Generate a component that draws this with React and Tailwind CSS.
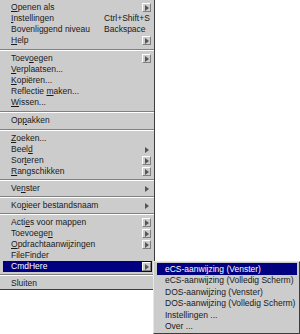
import React from 'react';

// Hoofdmenu: label, onderstreepte letter (index), sneltoets, pijl ('box' of 'plain')
const groups = [
    [
        { label: 'Openen als', u: 0, arrow: 'box' },
        { label: 'Instellingen', u: 0, shortcut: 'Ctrl+Shift+S' },
        { label: 'Bovenliggend niveau', u: -1, shortcut: 'Backspace' },
        { label: 'Help', u: 0, arrow: 'box' },
    ],
    [
        { label: 'Toevoegen', u: 4, arrow: 'box' },
        { label: 'Verplaatsen...', u: 0 },
        { label: 'Kopiëren...', u: 0 },
        { label: 'Reflectie maken...', u: 10 },
        { label: 'Wissen...', u: 0 },
    ],
    [{ label: 'Oppakken', u: 2 }],
    [
        { label: 'Zoeken...', u: 0 },
        { label: 'Beeld', u: 4, arrow: 'plain' },
        { label: 'Sorteren', u: 3, arrow: 'box' },
        { label: 'Rangschikken', u: 0, arrow: 'box' },
    ],
    [{ label: 'Venster', u: 2, arrow: 'plain' }],
    [{ label: 'Kopieer bestandsnaam', u: 2, arrow: 'plain' }],
    [
        { label: 'Acties voor mappen', u: 4, arrow: 'box' },
        { label: 'Toevoegen', u: 8, arrow: 'box' },
        { label: 'Opdrachtaanwijzingen', u: 0, arrow: 'box' },
        { label: 'FileFinder', u: -1 },
        { label: 'CmdHere', u: -1, arrow: 'box', active: true },
    ],
    [{ label: 'Sluiten', u: -1 }],
];

// hoogte van de scheidingslijn na elke groep
const sepHeights = ['h-[7px]', 'h-[7px]', 'h-[7px]', 'h-[6px]', 'h-[6px]', 'h-[6px]', 'h-[6px]'];

const subItems = [
    'eCS-aanwijzing (Venster)',
    'eCS-aanwijzing (Volledig Scherm)',
    'DOS-aanwijzing (Venster)',
    'DOS-aanwijzing (Volledig Scherm)',
    'Instellingen ...',
    'Over ...',
];

function Label({ text, u }) {
    if (u < 0) return <span>{text}</span>;
    return (
        <span>
            {text.slice(0, u)}
            <span className="underline underline-offset-[1px]">{text[u]}</span>
            {text.slice(u + 1)}
        </span>
    );
}

function Triangle() {
    return (
        <svg width="4" height="6" viewBox="0 0 4 6">
            <polygon points="0,0 4,3 0,6" fill="#555555" />
        </svg>
    );
}

function Arrow({ type }) {
    if (type === 'box') {
        return (
            <div className="w-[9px] h-[9px] flex items-center justify-center bg-[#cccccc] border border-t-white border-l-white border-r-[#7f7f7f] border-b-[#7f7f7f]">
                <Triangle />
            </div>
        );
    }
    return (
        <div className="w-[9px] h-[9px] flex items-center justify-center">
            <Triangle />
        </div>
    );
}

function Row({ item }) {
    return (
        <div
            className={
                'h-[11px] ml-[3px] mr-[2px] pl-[8px] pr-[1px] flex items-center leading-none ' +
                (item.active ? 'bg-[#000080] text-white' : 'text-[#1a1a1a]')
            }
        >
            <div className="w-[93px] shrink-0 whitespace-nowrap">
                <Label text={item.label} u={item.u} />
            </div>
            {item.shortcut && <div className="whitespace-nowrap">{item.shortcut}</div>}
            <div className="ml-auto">{item.arrow && <Arrow type={item.arrow} />}</div>
        </div>
    );
}

function Separator({ h }) {
    return (
        <div className={h + ' flex items-center'}>
            <div className="w-full border-t border-t-[#808080] border-b border-b-white" />
        </div>
    );
}

export default function App() {
    return (
        <div className="relative w-[300px] h-[334px] bg-white overflow-hidden font-['Liberation_Sans',Arial,sans-serif] text-[8.5px]">
            {/* hoofdmenu */}
            <div className="w-[155px] pt-[2px] bg-[#cccccc] border-r border-b border-[#3c3c3c] flex flex-col">
                {groups.map((group, gi) => (
                    <React.Fragment key={gi}>
                        {group.map((item, i) => (
                            <Row key={i} item={item} />
                        ))}
                        {gi < groups.length - 1 && <Separator h={sepHeights[gi]} />}
                    </React.Fragment>
                ))}
            </div>

            {/* submenu van CmdHere */}
            <div className="absolute left-[153px] top-[261px] w-[147px] h-[73px] pt-[1px] bg-[#cccccc] border border-t-[#e6e6e6] border-l-[#e6e6e6] border-r-[#3c3c3c] border-b-[#3c3c3c]">
                {subItems.map((s, i) => (
                    <div
                        key={i}
                        className={
                            'h-[11.5px] ml-[3px] mr-[2px] pl-[8px] flex items-center leading-none whitespace-nowrap ' +
                            (i === 0 ? 'bg-[#000080] text-white' : 'text-[#1a1a1a]')
                        }
                    >
                        {s}
                    </div>
                ))}
            </div>
        </div>
    );
}
